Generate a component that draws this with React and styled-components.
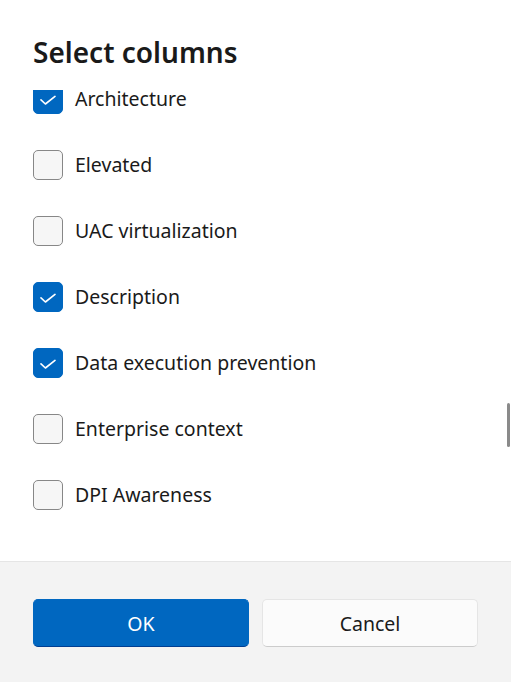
import React, { useLayoutEffect, useRef, useState } from "react";
import styled, { createGlobalStyle } from "styled-components";

const GlobalStyle = createGlobalStyle`
  html, body {
    margin: 0;
    padding: 0;
    background: #ffffff;
  }
  body {
    font-family: "Noto Sans", "Open Sans", sans-serif;
    color: #1a1a1a;
  }
`;

const ROW = 66;

const initialColumns = [
  { name: "Image path name", checked: false },
  { name: "Platform", checked: true },
  { name: "Architecture", checked: true },
  { name: "Elevated", checked: false },
  { name: "UAC virtualization", checked: false },
  { name: "Description", checked: true },
  { name: "Data execution prevention", checked: true },
  { name: "Enterprise context", checked: false },
  { name: "DPI Awareness", checked: false },
  { name: "Power throttling", checked: false },
  { name: "Operating system context", checked: false },
  { name: "Hardware-enforced stack protection", checked: false },
];

const App = () => {
  const [columns, setColumns] = useState(initialColumns);
  const listRef = useRef(null);

  useLayoutEffect(() => {
    // the list is shown scrolled down to "Architecture"
    if (listRef.current) listRef.current.scrollTop = 2 * ROW + 24;
  }, []);

  const toggle = (index) => {
    setColumns((cols) =>
      cols.map((c, i) => (i === index ? { ...c, checked: !c.checked } : c))
    );
  };

  return (
    <Dialog>
      <GlobalStyle />
      <Title>Select columns</Title>
      <ListArea>
        <List ref={listRef}>
          {columns.map((col, i) => (
            <Row key={col.name} onClick={() => toggle(i)}>
              <Box checked={col.checked}>
                {col.checked && (
                  <svg width="16" height="16" viewBox="0 0 16 16">
                    <path
                      d="M1 8.9 L5.4 13 L15 5.4"
                      fill="none"
                      stroke="#ffffff"
                      strokeWidth="1.6"
                      strokeLinecap="round"
                      strokeLinejoin="round"
                    />
                  </svg>
                )}
              </Box>
              <Label>{col.name}</Label>
            </Row>
          ))}
        </List>
        <ScrollThumb />
      </ListArea>
      <Footer>
        <PrimaryButton>OK</PrimaryButton>
        <SecondaryButton>Cancel</SecondaryButton>
      </Footer>
    </Dialog>
  );
};

export default App;

const Dialog = styled.div`
  width: 511px;
  height: 682px;
  display: flex;
  flex-direction: column;
  background: #ffffff;
  overflow: hidden;
`;

const Title = styled.h1`
  margin: 0;
  padding: 34px 33px 0 33px;
  height: 90px;
  flex-shrink: 0;
  box-sizing: border-box;
  font-size: 28px;
  line-height: 36px;
  font-weight: 600;
  color: #1a1a1a;
`;

const ListArea = styled.div`
  position: relative;
  flex: 1;
  min-height: 0;
  padding-bottom: 26px;
`;

const List = styled.div`
  height: 100%;
  overflow-y: auto;
  scrollbar-width: none;
  padding: 0 33px;
  box-sizing: border-box;

  &::-webkit-scrollbar {
    display: none;
  }
`;

const Row = styled.div`
  height: ${ROW}px;
  display: flex;
  align-items: center;
  gap: 12px;
  cursor: pointer;
`;

const Box = styled.span`
  width: 30px;
  height: 30px;
  box-sizing: border-box;
  border-radius: 5px;
  display: flex;
  align-items: center;
  justify-content: center;
  flex-shrink: 0;
  background: ${(p) => (p.checked ? "#0067c0" : "#f6f6f6")};
  border: 1px solid ${(p) => (p.checked ? "#0067c0" : "#878787")};
`;

const Label = styled.span`
  font-size: 19.5px;
  line-height: 26px;
  color: #1a1a1a;
`;

const ScrollThumb = styled.div`
  position: absolute;
  right: 1px;
  top: 313px;
  width: 3px;
  height: 44px;
  border-radius: 2px;
  background: #8a8a8a;
`;

const Footer = styled.div`
  height: 121px;
  flex-shrink: 0;
  box-sizing: border-box;
  border-top: 1px solid #e5e5e5;
  background: #f3f3f3;
  padding: 37px 33px 0 33px;
  display: grid;
  grid-template-columns: 1fr 1fr;
  column-gap: 13px;
  align-items: start;
`;

const ButtonBase = styled.button`
  height: 48px;
  border-radius: 5px;
  font-family: "Noto Sans", "Open Sans", sans-serif;
  font-size: 19.5px;
  box-sizing: border-box;
  cursor: pointer;
`;

const PrimaryButton = styled(ButtonBase)`
  background: #0067c0;
  color: #ffffff;
  border: 1px solid #0067c0;
  border-bottom-color: #003e92;
`;

const SecondaryButton = styled(ButtonBase)`
  background: #fbfbfb;
  color: #1a1a1a;
  border: 1px solid #e5e5e5;
  border-bottom-color: #cccccc;
`;
